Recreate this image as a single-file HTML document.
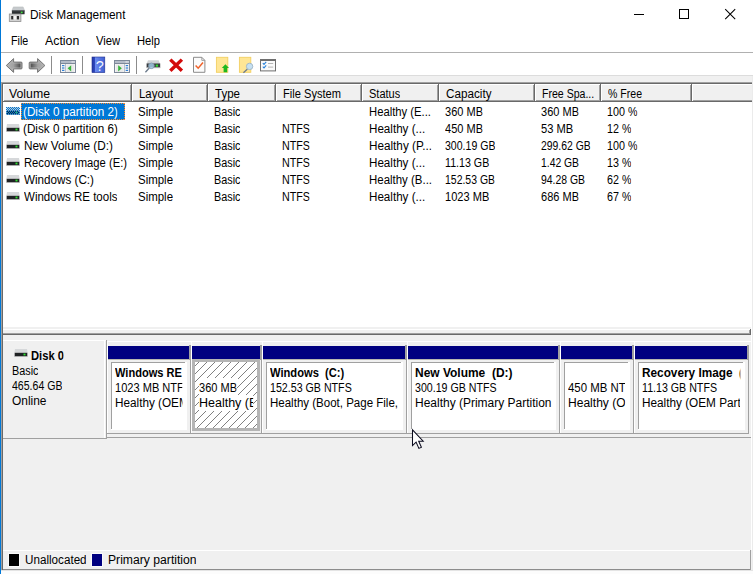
<!DOCTYPE html><html><head><meta charset="utf-8"><title>Disk Management</title><style>
html,body{margin:0;padding:0}body{width:753px;height:574px;overflow:hidden;position:relative;background:#fff;font-family:"Liberation Sans", sans-serif;}
#w{position:absolute;left:0;top:0;width:753px;height:574px;overflow:hidden}
#w div,#w svg,#w span{position:absolute;box-sizing:content-box}
#w span{white-space:pre;transform-origin:0 0;line-height:16px;height:16px;overflow:hidden}
</style></head><body><div id="w">
<div style="left:0px;top:0px;width:753px;height:574px;background:#fff;"></div>
<div style="left:0px;top:75px;width:753px;height:499px;background:#f0f0f0;"></div>
<div style="left:1px;top:52px;width:752px;height:1px;background:#b0b0b0;"></div>
<div style="left:1px;top:75px;width:752px;height:1px;background:#dcdcdc;"></div>
<svg style="left:8px;top:5px" width="18" height="18" viewBox="8 5 18 18">
<path d="M13.4 6.9 H23.1 L24.6 10.6 H11.9 Z" fill="#c6cacd" stroke="#b4b8bb" stroke-width="0.5"/>
<rect x="11.9" y="10.4" width="12.7" height="3.9" rx="0.5" fill="#2b2f31"/>
<rect x="11.9" y="10.4" width="12.7" height="0.9" fill="#4d5356"/>
<rect x="20.8" y="11.6" width="1.8" height="1.6" fill="#3ee03e"/>
<rect x="9.3" y="14" width="11.6" height="7.5" fill="#d2d2d2" stroke="#8e8e8e" stroke-width="0.8"/>
<rect x="11.2" y="16" width="2.2" height="3.4" fill="#2b2b2b"/>
<rect x="13.6" y="16" width="3" height="3.4" fill="#f4f4f4"/>
<rect x="16.8" y="16" width="2.2" height="3.4" fill="#2b2b2b"/>
</svg>
<div style="left:634px;top:14px;width:10px;height:1px;background:#000;"></div>
<div style="left:679px;top:9px;width:8px;height:8px;border:1px solid #000"></div>
<svg style="left:723px;top:7px" width="14" height="14" viewBox="0 0 14 14"><path d="M2.2 2.2 L12.2 12.2 M12.2 2.2 L2.2 12.2" stroke="#000" stroke-width="1.05" fill="none"/></svg>
<svg style="left:0;top:53px" width="300" height="22" viewBox="0 53 300 22">
<defs>
<linearGradient id="gl" x1="0" y1="0" x2="1" y2="0"><stop offset="0" stop-color="#b4b4b4"/><stop offset="0.45" stop-color="#a2a2a2"/><stop offset="0.85" stop-color="#585858"/><stop offset="1" stop-color="#808080"/></linearGradient><linearGradient id="gr" x1="1" y1="0" x2="0" y2="0"><stop offset="0" stop-color="#b4b4b4"/><stop offset="0.45" stop-color="#a2a2a2"/><stop offset="0.85" stop-color="#585858"/><stop offset="1" stop-color="#808080"/></linearGradient>
<linearGradient id="gb" x1="0" y1="0" x2="1" y2="0"><stop offset="0" stop-color="#2438a8"/><stop offset="0.22" stop-color="#2f49bd"/><stop offset="0.25" stop-color="#6b8bf0"/><stop offset="1" stop-color="#3f5fd2"/></linearGradient>
</defs>
<path d="M6.3 65.5 L13.6 58.6 V62.1 H21.2 Q22 62.1 22 62.9 V68.1 Q22 68.9 21.2 68.9 H13.6 V72.4 Z" fill="url(#gl)" stroke="#767676" stroke-width="1" stroke-linejoin="round"/>
<path d="M7.9 65.5 L12.6 61.1 V63.1 H21 V67.9 H12.6 V69.9 Z" fill="none" stroke="#b4b4b4" stroke-width="0.7" stroke-linejoin="round"/>
<path d="M44.9 65.5 L37.6 58.6 V62.1 H30 Q29.2 62.1 29.2 62.9 V68.1 Q29.2 68.9 30 68.9 H37.6 V72.4 Z" fill="url(#gr)" stroke="#767676" stroke-width="1" stroke-linejoin="round"/>
<path d="M43.3 65.5 L38.6 61.1 V63.1 H30.2 V67.9 H38.6 V69.9 Z" fill="none" stroke="#b4b4b4" stroke-width="0.7" stroke-linejoin="round"/>
<rect x="51" y="56" width="1" height="18" fill="#8c8c8c"/>
<rect x="82" y="56" width="1" height="18" fill="#8c8c8c"/>
<rect x="136" y="56" width="1" height="18" fill="#8c8c8c"/>
<!-- window + left green arrow -->
<g>
<rect x="60.5" y="60.5" width="15" height="12" fill="#f4f4f4" stroke="#7d8899" stroke-width="1"/>
<rect x="61" y="61" width="14" height="2" fill="#b4bbc8"/><rect x="71.6" y="61.4" width="1.1" height="1.1" fill="#fff"/><rect x="73.4" y="61.4" width="1.1" height="1.1" fill="#fff"/>
<rect x="61" y="63" width="14" height="1" fill="#7d8899"/>
<rect x="65" y="64" width="1" height="8" fill="#b9c0cc"/>
<rect x="62" y="65" width="2.4" height="1.2" fill="#2f7fd6"/><rect x="62" y="67.4" width="2.4" height="1.2" fill="#2f7fd6"/><rect x="62" y="69.8" width="2.4" height="1.2" fill="#2f7fd6"/>
<rect x="66.5" y="64.5" width="7.5" height="7.5" fill="#e9e9e9"/>
<path d="M71.2 65.2 V71.4 L67.6 68.3 Z" fill="#35b23a"/>
</g>
<!-- help book -->
<g>
<rect x="92" y="57" width="12.8" height="15.6" fill="url(#gb)" stroke="#20318f" stroke-width="0.6"/>
<text x="99.7" y="70.8" font-family="Liberation Sans, sans-serif" font-size="14.5" fill="#fff" fill-opacity="0.95" text-anchor="middle">?</text>
</g>
<!-- window + right green arrow -->
<g>
<rect x="114.5" y="60.5" width="15" height="12" fill="#f4f4f4" stroke="#7d8899" stroke-width="1"/>
<rect x="115" y="61" width="14" height="2" fill="#b4bbc8"/><rect x="125.6" y="61.4" width="1.1" height="1.1" fill="#fff"/><rect x="127.4" y="61.4" width="1.1" height="1.1" fill="#fff"/>
<rect x="115" y="63" width="14" height="1" fill="#7d8899"/>
<rect x="124" y="64" width="1" height="8" fill="#b9c0cc"/>
<rect x="125.7" y="65" width="2.4" height="1.2" fill="#2f7fd6"/><rect x="125.7" y="67.4" width="2.4" height="1.2" fill="#2f7fd6"/><rect x="125.7" y="69.8" width="2.4" height="1.2" fill="#2f7fd6"/>
<rect x="116" y="64.5" width="7.5" height="7.5" fill="#e9e9e9"/>
<path d="M118.2 65.2 V71.4 L121.8 68.3 Z" fill="#35b23a"/>
</g>
<!-- drive + magnifier -->
<g>
<path d="M148 60.3 H158.6 L160 63.6 H146.6 Z" fill="#d0d3d6"/>
<rect x="146.6" y="63.4" width="13.6" height="4.4" fill="#3a3e41"/>
<rect x="146.6" y="67.3" width="13.6" height="0.9" fill="#c4c4c4"/>
<rect x="155.8" y="64.6" width="2.2" height="2" fill="#2fe02f"/>
<path d="M149.3 68 L145.4 72.3" stroke="#6c7b8c" stroke-width="1.3" fill="none"/>
<circle cx="151.4" cy="65.8" r="2.8" fill="#a9d3ef" fill-opacity="0.8" stroke="#7f98ad" stroke-width="0.9"/>
</g>
<!-- red X -->
<path d="M170.3 59.6 L181.9 70.8 M181.9 59.6 L170.3 70.8" stroke="#d30a0a" stroke-width="3.4" fill="none" stroke-linecap="butt"/>
<!-- doc with check -->
<g>
<path d="M193.5 57.3 H201.8 L204.9 60.4 V72.3 H193.5 Z" fill="#fbfbfb" stroke="#8b8b8b" stroke-width="1"/>
<path d="M201.8 57.3 V60.4 H204.9" fill="none" stroke="#8b8b8b" stroke-width="0.8"/>
<path d="M195.6 65.4 L198.2 68.2 L203 62.6" stroke="#f0622a" stroke-width="1.5" fill="none"/>
</g>
<!-- yellow doc + up arrow -->
<g>
<rect x="216.4" y="57.3" width="11.4" height="15" fill="#ffe695" stroke="#f2cf62" stroke-width="0.9"/>
<path d="M225.4 64.2 L229 68 H227.2 V72.3 H223.6 V68 H221.8 Z" fill="#1fb81f"/>
</g>
<!-- yellow doc + magnifier -->
<g>
<rect x="239.4" y="57.3" width="11.4" height="15" fill="#ffe695" stroke="#f2cf62" stroke-width="0.9"/>
<path d="M247.5 69 L243.4 72.8" stroke="#6c7b8c" stroke-width="1.3" fill="none"/>
<circle cx="249.6" cy="66.4" r="3.2" fill="#c5e0f2" stroke="#9fb6c6" stroke-width="0.9"/>
</g>
<!-- checklist -->
<g>
<rect x="260.5" y="59.5" width="15" height="11.4" fill="#fafafa" stroke="#6f6f6f" stroke-width="1"/>
<rect x="260" y="59" width="16" height="2" fill="#6f6f6f"/>
<path d="M262.8 63.2 L264 64.4 L266.2 61.8 M262.8 66.7 L264 67.9 L266.2 65.3" stroke="#2f86dc" stroke-width="1.1" fill="none"/>
<rect x="268" y="63" width="5.2" height="1" fill="#b5b5b5"/><rect x="268" y="66.6" width="5.2" height="1" fill="#b5b5b5"/>
</g>
</svg>
<div style="left:1px;top:82px;width:751px;height:246px;background:#a0a0a0;"></div>
<div style="left:2px;top:83px;width:750px;height:245px;background:#696969;"></div>
<div style="left:3px;top:84px;width:749px;height:244px;background:#fff;"></div>
<div style="left:752px;top:82px;width:1px;height:246px;background:#e3e3e3;"></div>
<div style="left:3px;top:84px;width:129px;height:18px;background:#696969;"></div>
<div style="left:3px;top:84px;width:128px;height:17px;background:#fff;"></div>
<div style="left:4px;top:85px;width:127px;height:16px;background:#a0a0a0;"></div>
<div style="left:4px;top:85px;width:126px;height:15px;background:#f0f0f0;"></div>
<div style="left:132px;top:84px;width:76px;height:18px;background:#696969;"></div>
<div style="left:132px;top:84px;width:75px;height:17px;background:#fff;"></div>
<div style="left:133px;top:85px;width:74px;height:16px;background:#a0a0a0;"></div>
<div style="left:133px;top:85px;width:73px;height:15px;background:#f0f0f0;"></div>
<div style="left:208px;top:84px;width:68px;height:18px;background:#696969;"></div>
<div style="left:208px;top:84px;width:67px;height:17px;background:#fff;"></div>
<div style="left:209px;top:85px;width:66px;height:16px;background:#a0a0a0;"></div>
<div style="left:209px;top:85px;width:65px;height:15px;background:#f0f0f0;"></div>
<div style="left:276px;top:84px;width:86px;height:18px;background:#696969;"></div>
<div style="left:276px;top:84px;width:85px;height:17px;background:#fff;"></div>
<div style="left:277px;top:85px;width:84px;height:16px;background:#a0a0a0;"></div>
<div style="left:277px;top:85px;width:83px;height:15px;background:#f0f0f0;"></div>
<div style="left:362px;top:84px;width:77px;height:18px;background:#696969;"></div>
<div style="left:362px;top:84px;width:76px;height:17px;background:#fff;"></div>
<div style="left:363px;top:85px;width:75px;height:16px;background:#a0a0a0;"></div>
<div style="left:363px;top:85px;width:74px;height:15px;background:#f0f0f0;"></div>
<div style="left:439px;top:84px;width:96px;height:18px;background:#696969;"></div>
<div style="left:439px;top:84px;width:95px;height:17px;background:#fff;"></div>
<div style="left:440px;top:85px;width:94px;height:16px;background:#a0a0a0;"></div>
<div style="left:440px;top:85px;width:93px;height:15px;background:#f0f0f0;"></div>
<div style="left:535px;top:84px;width:66px;height:18px;background:#696969;"></div>
<div style="left:535px;top:84px;width:65px;height:17px;background:#fff;"></div>
<div style="left:536px;top:85px;width:64px;height:16px;background:#a0a0a0;"></div>
<div style="left:536px;top:85px;width:63px;height:15px;background:#f0f0f0;"></div>
<div style="left:601px;top:84px;width:91px;height:18px;background:#696969;"></div>
<div style="left:601px;top:84px;width:90px;height:17px;background:#fff;"></div>
<div style="left:602px;top:85px;width:89px;height:16px;background:#a0a0a0;"></div>
<div style="left:602px;top:85px;width:88px;height:15px;background:#f0f0f0;"></div>
<div style="left:692px;top:84px;width:60px;height:18px;background:#696969;"></div>
<div style="left:692px;top:84px;width:60px;height:17px;background:#fff;"></div>
<div style="left:693px;top:85px;width:59px;height:16px;background:#a0a0a0;"></div>
<div style="left:693px;top:85px;width:59px;height:15px;background:#f0f0f0;"></div>
<div style="left:21px;top:103px;width:104px;height:17px;background:#0078d7;"></div>
<div style="left:21px;top:103px;width:104px;height:1px;background:repeating-linear-gradient(90deg,#ff8728 0 1px,transparent 1px 2px)"></div>
<div style="left:21px;top:119px;width:104px;height:1px;background:repeating-linear-gradient(90deg,#ff8728 0 1px,transparent 1px 2px)"></div>
<div style="left:21px;top:103px;width:1px;height:17px;background:repeating-linear-gradient(180deg,#ff8728 0 1px,transparent 1px 2px)"></div>
<div style="left:124px;top:103px;width:1px;height:17px;background:repeating-linear-gradient(180deg,#ff8728 0 1px,transparent 1px 2px)"></div>
<svg style="left:6px;top:107px" width="14" height="8" viewBox="0 0 14 8"><defs><pattern id="dz" width="2" height="2" patternUnits="userSpaceOnUse"><rect width="1" height="1" fill="#0078d7"/><rect x="1" y="1" width="1" height="1" fill="#0078d7"/></pattern></defs><rect x="1" y="0" width="12" height="4" fill="#d4d4d4"/><rect x="0" y="3.6" width="14" height="4.4" fill="#c8c8c8"/><rect x="0.8" y="3.8" width="12.4" height="3.4" fill="#222"/><rect x="9.5" y="4.6" width="2" height="1.8" fill="#2fe02f"/><rect width="14" height="8" fill="url(#dz)"/><rect width="14" height="8" fill="#0078d7" fill-opacity="0.12"/></svg>
<svg style="left:6px;top:124px" width="14" height="8" viewBox="0 0 14 8"><path d="M1 0 H13 L13.6 3.8 H0.4 Z" fill="#d6d8da"/><rect x="0" y="3.6" width="14" height="4.4" fill="#cfcfcf"/><rect x="0.8" y="3.8" width="12.4" height="3.4" fill="#1f2224"/><rect x="9.5" y="4.6" width="2" height="1.8" fill="#2fe02f"/></svg>
<svg style="left:6px;top:141px" width="14" height="8" viewBox="0 0 14 8"><path d="M1 0 H13 L13.6 3.8 H0.4 Z" fill="#d6d8da"/><rect x="0" y="3.6" width="14" height="4.4" fill="#cfcfcf"/><rect x="0.8" y="3.8" width="12.4" height="3.4" fill="#1f2224"/><rect x="9.5" y="4.6" width="2" height="1.8" fill="#2fe02f"/></svg>
<svg style="left:6px;top:158px" width="14" height="8" viewBox="0 0 14 8"><path d="M1 0 H13 L13.6 3.8 H0.4 Z" fill="#d6d8da"/><rect x="0" y="3.6" width="14" height="4.4" fill="#cfcfcf"/><rect x="0.8" y="3.8" width="12.4" height="3.4" fill="#1f2224"/><rect x="9.5" y="4.6" width="2" height="1.8" fill="#2fe02f"/></svg>
<svg style="left:6px;top:175px" width="14" height="8" viewBox="0 0 14 8"><path d="M1 0 H13 L13.6 3.8 H0.4 Z" fill="#d6d8da"/><rect x="0" y="3.6" width="14" height="4.4" fill="#cfcfcf"/><rect x="0.8" y="3.8" width="12.4" height="3.4" fill="#1f2224"/><rect x="9.5" y="4.6" width="2" height="1.8" fill="#2fe02f"/></svg>
<svg style="left:6px;top:192px" width="14" height="8" viewBox="0 0 14 8"><path d="M1 0 H13 L13.6 3.8 H0.4 Z" fill="#d6d8da"/><rect x="0" y="3.6" width="14" height="4.4" fill="#cfcfcf"/><rect x="0.8" y="3.8" width="12.4" height="3.4" fill="#1f2224"/><rect x="9.5" y="4.6" width="2" height="1.8" fill="#2fe02f"/></svg>
<div style="left:1px;top:327px;width:752px;height:8px;background:#f0f0f0;"></div>
<div style="left:3px;top:329px;width:748px;height:1px;background:#fff;"></div>
<div style="left:3px;top:333px;width:747px;height:1px;background:#a0a0a0;"></div>
<div style="left:3px;top:334px;width:748px;height:1px;background:#696969;"></div>
<div style="left:749px;top:330px;width:1px;height:4px;background:#a0a0a0;"></div>
<div style="left:750px;top:329px;width:1px;height:6px;background:#696969;"></div>
<div style="left:751px;top:327px;width:1px;height:8px;background:#fff;"></div>
<div style="left:1px;top:327px;width:1px;height:8px;background:#a0a0a0;"></div>
<div style="left:2px;top:327px;width:1px;height:8px;background:#696969;"></div>
<div style="left:1px;top:335px;width:1px;height:235px;background:#a0a0a0;"></div>
<div style="left:2px;top:335px;width:1px;height:235px;background:#696969;"></div>
<div style="left:751px;top:335px;width:2px;height:215px;background:#fff;"></div>
<div style="left:3px;top:340px;width:103px;height:1px;background:#fff;"></div>
<div style="left:104px;top:341px;width:1px;height:97px;background:#fff;"></div>
<div style="left:3px;top:438px;width:104px;height:1px;background:#a0a0a0;"></div>
<div style="left:106px;top:340px;width:1px;height:99px;background:#a0a0a0;"></div>
<div style="left:107px;top:341px;width:644px;height:1px;background:#fff;"></div>
<div style="left:107px;top:342px;width:1px;height:92px;background:#fff;"></div>
<div style="left:106px;top:433px;width:643px;height:1px;background:#a0a0a0;"></div>
<div style="left:106px;top:437px;width:645px;height:1px;background:#a0a0a0;"></div>
<svg style="left:14px;top:349px" width="14" height="8" viewBox="0 0 14 8"><path d="M1 0 H13 L13.6 3.8 H0.4 Z" fill="#d6d8da"/><rect x="0" y="3.6" width="14" height="4.4" fill="#cfcfcf"/><rect x="0.8" y="3.8" width="12.4" height="3.4" fill="#1f2224"/><rect x="9.5" y="4.6" width="2" height="1.8" fill="#2fe02f"/></svg>
<div style="left:108px;top:346px;width:81px;height:13px;background:#000080;"></div>
<div style="left:108px;top:359px;width:81px;height:1px;background:#b8b8b0;"></div>
<div style="left:189px;top:345px;width:2px;height:15px;background:#a0a0a0;"></div>
<div style="left:190px;top:360px;width:1px;height:73px;background:#a0a0a0;"></div>
<div style="left:191px;top:342px;width:1px;height:91px;background:#fff;"></div>
<div style="left:111px;top:362px;width:76px;height:68px;background:#fff;"></div>
<div style="left:111px;top:362px;width:74px;height:1px;background:#a0a0a0;"></div>
<div style="left:111px;top:362px;width:1px;height:67px;background:#a0a0a0;"></div>
<div style="left:192px;top:346px;width:68px;height:13px;background:#000080;"></div>
<div style="left:192px;top:359px;width:68px;height:1px;background:#b8b8b0;"></div>
<div style="left:260px;top:345px;width:2px;height:15px;background:#a0a0a0;"></div>
<div style="left:261px;top:360px;width:1px;height:73px;background:#a0a0a0;"></div>
<div style="left:262px;top:342px;width:1px;height:91px;background:#fff;"></div>
<div style="left:192px;top:359px;width:62px;height:66px;border:3px solid #b4b4b4;background:#fff"></div>
<svg style="left:195px;top:362px" width="62" height="66" shape-rendering="crispEdges"><defs><pattern id="hz" width="8" height="8" patternUnits="userSpaceOnUse"><g fill="#808080"><rect x="3" y="0" width="1" height="1"/><rect x="2" y="1" width="1" height="1"/><rect x="1" y="2" width="1" height="1"/><rect x="0" y="3" width="1" height="1"/><rect x="7" y="4" width="1" height="1"/><rect x="6" y="5" width="1" height="1"/><rect x="5" y="6" width="1" height="1"/><rect x="4" y="7" width="1" height="1"/></g></pattern></defs><rect width="62" height="66" fill="url(#hz)"/></svg>
<div style="left:263px;top:346px;width:142px;height:13px;background:#000080;"></div>
<div style="left:263px;top:359px;width:142px;height:1px;background:#b8b8b0;"></div>
<div style="left:405px;top:345px;width:2px;height:15px;background:#a0a0a0;"></div>
<div style="left:406px;top:360px;width:1px;height:73px;background:#a0a0a0;"></div>
<div style="left:407px;top:342px;width:1px;height:91px;background:#fff;"></div>
<div style="left:266px;top:362px;width:137px;height:68px;background:#fff;"></div>
<div style="left:266px;top:362px;width:135px;height:1px;background:#a0a0a0;"></div>
<div style="left:266px;top:362px;width:1px;height:67px;background:#a0a0a0;"></div>
<div style="left:408px;top:346px;width:150px;height:13px;background:#000080;"></div>
<div style="left:408px;top:359px;width:150px;height:1px;background:#b8b8b0;"></div>
<div style="left:558px;top:345px;width:2px;height:15px;background:#a0a0a0;"></div>
<div style="left:559px;top:360px;width:1px;height:73px;background:#a0a0a0;"></div>
<div style="left:560px;top:342px;width:1px;height:91px;background:#fff;"></div>
<div style="left:411px;top:362px;width:145px;height:68px;background:#fff;"></div>
<div style="left:411px;top:362px;width:143px;height:1px;background:#a0a0a0;"></div>
<div style="left:411px;top:362px;width:1px;height:67px;background:#a0a0a0;"></div>
<div style="left:561px;top:346px;width:71px;height:13px;background:#000080;"></div>
<div style="left:561px;top:359px;width:71px;height:1px;background:#b8b8b0;"></div>
<div style="left:632px;top:345px;width:2px;height:15px;background:#a0a0a0;"></div>
<div style="left:633px;top:360px;width:1px;height:73px;background:#a0a0a0;"></div>
<div style="left:634px;top:342px;width:1px;height:91px;background:#fff;"></div>
<div style="left:564px;top:362px;width:66px;height:68px;background:#fff;"></div>
<div style="left:564px;top:362px;width:64px;height:1px;background:#a0a0a0;"></div>
<div style="left:564px;top:362px;width:1px;height:67px;background:#a0a0a0;"></div>
<div style="left:635px;top:346px;width:112px;height:13px;background:#000080;"></div>
<div style="left:635px;top:359px;width:112px;height:1px;background:#b8b8b0;"></div>
<div style="left:747px;top:345px;width:2px;height:15px;background:#a0a0a0;"></div>
<div style="left:748px;top:360px;width:1px;height:73px;background:#a0a0a0;"></div>
<div style="left:638px;top:362px;width:107px;height:68px;background:#fff;"></div>
<div style="left:638px;top:362px;width:105px;height:1px;background:#a0a0a0;"></div>
<div style="left:638px;top:362px;width:1px;height:67px;background:#a0a0a0;"></div>
<div style="left:199px;top:378px;width:39px;height:3px;background:#fff;"></div>
<div style="left:3px;top:550px;width:747px;height:1px;background:#fff;"></div>
<div style="left:3px;top:569px;width:748px;height:1px;background:#8c8c8c;"></div>
<div style="left:750px;top:550px;width:1px;height:20px;background:#a0a0a0;"></div>
<div style="left:8px;top:553px;width:12px;height:14px;background:#fafafa;"></div>
<div style="left:9px;top:554px;width:10px;height:12px;background:#000;"></div>
<div style="left:91px;top:553px;width:12px;height:14px;background:#fafafa;"></div>
<div style="left:92px;top:554px;width:10px;height:12px;background:#000080;"></div>
<div style="left:1px;top:570px;width:752px;height:1px;background:#e4e4e4;"></div>
<div style="left:1px;top:571px;width:752px;height:3px;background:#fcfcfc;"></div>
<div style="left:752px;top:76px;width:1px;height:494px;background:#ebebeb;"></div>
<div style="left:0px;top:0px;width:1px;height:574px;background:#0078d7;"></div>
<svg style="left:410px;top:427px" width="16" height="24" viewBox="-2 -2 16 24"><path d="M0.5 0.8 V16.6 L4.1 13.1 L6.9 19.4 L9.4 18.3 L6.7 12.3 L11.2 12.2 Z" fill="#fff" stroke="#0b0b1e" stroke-width="1.05" stroke-linejoin="miter"/></svg>
<span id="t0" style="left:30px;top:7px;font-size:12px;color:#000;transform:scaleX(0.9874);">Disk Management</span>
<span id="t1" style="left:11px;top:33px;font-size:12px;color:#000;transform:scaleX(0.8943);">File</span>
<span id="t2" style="left:45px;top:33px;font-size:12px;color:#000;transform:scaleX(1.0282);">Action</span>
<span id="t3" style="left:96.2px;top:33px;font-size:12px;color:#000;transform:scaleX(0.9381);">View</span>
<span id="t4" style="left:137px;top:33px;font-size:12px;color:#000;transform:scaleX(0.9316);">Help</span>
<span id="t5" style="left:8.9px;top:86px;font-size:12px;color:#000;transform:scaleX(1.0242);">Volume</span>
<span id="t6" style="left:138.5px;top:86px;font-size:12px;color:#000;transform:scaleX(0.9506);">Layout</span>
<span id="t7" style="left:214.5px;top:86px;font-size:12px;color:#000;transform:scaleX(0.9610);">Type</span>
<span id="t8" style="left:282.5px;top:86px;font-size:12px;color:#000;transform:scaleX(0.9252);">File System</span>
<span id="t9" style="left:368.5px;top:86px;font-size:12px;color:#000;transform:scaleX(0.9183);">Status</span>
<span id="t10" style="left:445.5px;top:86px;font-size:12px;color:#000;transform:scaleX(0.9746);">Capacity</span>
<span id="t11" style="left:541.5px;top:86px;font-size:12px;color:#000;transform:scaleX(0.8800);">Free Spa...</span>
<span id="t12" style="left:607.5px;top:86px;font-size:12px;color:#000;transform:scaleX(0.8788);">% Free</span>
<span id="t13" style="left:23.4px;top:104px;font-size:12px;color:#fff;transform:scaleX(0.9756);">(Disk 0 partition 2)</span>
<span id="t14" style="left:138.3px;top:104px;font-size:12px;color:#000;transform:scaleX(0.9540);">Simple</span>
<span id="t15" style="left:214.2px;top:104px;font-size:12px;color:#000;transform:scaleX(0.9031);">Basic</span>
<span id="t16" style="left:368.6px;top:104px;font-size:12px;color:#000;transform:scaleX(0.9389);">Healthy (E...</span>
<span id="t17" style="left:445.2px;top:104px;font-size:12px;color:#000;transform:scaleX(0.9188);">360 MB</span>
<span id="t18" style="left:541.2px;top:104px;font-size:12px;color:#000;transform:scaleX(0.9188);">360 MB</span>
<span id="t19" style="left:607.2px;top:104px;font-size:12px;color:#000;transform:scaleX(0.8962);">100 %</span>
<span id="t20" style="left:23.4px;top:121px;font-size:12px;color:#000;transform:scaleX(0.9756);">(Disk 0 partition 6)</span>
<span id="t21" style="left:138.3px;top:121px;font-size:12px;color:#000;transform:scaleX(0.9540);">Simple</span>
<span id="t22" style="left:214.2px;top:121px;font-size:12px;color:#000;transform:scaleX(0.9031);">Basic</span>
<span id="t23" style="left:282.2px;top:121px;font-size:12px;color:#000;transform:scaleX(0.8933);">NTFS</span>
<span id="t24" style="left:368.6px;top:121px;font-size:12px;color:#000;transform:scaleX(0.9693);">Healthy (...</span>
<span id="t25" style="left:445.2px;top:121px;font-size:12px;color:#000;transform:scaleX(0.9188);">450 MB</span>
<span id="t26" style="left:541.2px;top:121px;font-size:12px;color:#000;transform:scaleX(0.9297);">53 MB</span>
<span id="t27" style="left:607.2px;top:121px;font-size:12px;color:#000;transform:scaleX(0.8955);">12 %</span>
<span id="t28" style="left:23.799999999999997px;top:138px;font-size:12px;color:#000;transform:scaleX(0.9812);">New Volume (D:)</span>
<span id="t29" style="left:138.3px;top:138px;font-size:12px;color:#000;transform:scaleX(0.9540);">Simple</span>
<span id="t30" style="left:214.2px;top:138px;font-size:12px;color:#000;transform:scaleX(0.9031);">Basic</span>
<span id="t31" style="left:282.2px;top:138px;font-size:12px;color:#000;transform:scaleX(0.8933);">NTFS</span>
<span id="t32" style="left:368.6px;top:138px;font-size:12px;color:#000;transform:scaleX(0.9770);">Healthy (P...</span>
<span id="t33" style="left:445.2px;top:138px;font-size:12px;color:#000;transform:scaleX(0.8802);">300.19 GB</span>
<span id="t34" style="left:541.2px;top:138px;font-size:12px;color:#000;transform:scaleX(0.8671);">299.62 GB</span>
<span id="t35" style="left:607.2px;top:138px;font-size:12px;color:#000;transform:scaleX(0.8962);">100 %</span>
<span id="t36" style="left:23.799999999999997px;top:155px;font-size:12px;color:#000;transform:scaleX(0.9360);">Recovery Image (E:)</span>
<span id="t37" style="left:138.3px;top:155px;font-size:12px;color:#000;transform:scaleX(0.9540);">Simple</span>
<span id="t38" style="left:214.2px;top:155px;font-size:12px;color:#000;transform:scaleX(0.9031);">Basic</span>
<span id="t39" style="left:282.2px;top:155px;font-size:12px;color:#000;transform:scaleX(0.8933);">NTFS</span>
<span id="t40" style="left:368.6px;top:155px;font-size:12px;color:#000;transform:scaleX(0.9693);">Healthy (...</span>
<span id="t41" style="left:445.2px;top:155px;font-size:12px;color:#000;transform:scaleX(0.8883);">11.13 GB</span>
<span id="t42" style="left:541.2px;top:155px;font-size:12px;color:#000;transform:scaleX(0.8630);">1.42 GB</span>
<span id="t43" style="left:607.2px;top:155px;font-size:12px;color:#000;transform:scaleX(0.8955);">13 %</span>
<span id="t44" style="left:23.799999999999997px;top:172px;font-size:12px;color:#000;transform:scaleX(0.9720);">Windows (C:)</span>
<span id="t45" style="left:138.3px;top:172px;font-size:12px;color:#000;transform:scaleX(0.9540);">Simple</span>
<span id="t46" style="left:214.2px;top:172px;font-size:12px;color:#000;transform:scaleX(0.9031);">Basic</span>
<span id="t47" style="left:282.2px;top:172px;font-size:12px;color:#000;transform:scaleX(0.8933);">NTFS</span>
<span id="t48" style="left:368.6px;top:172px;font-size:12px;color:#000;transform:scaleX(0.9541);">Healthy (B...</span>
<span id="t49" style="left:445.2px;top:172px;font-size:12px;color:#000;transform:scaleX(0.8715);">152.53 GB</span>
<span id="t50" style="left:541.2px;top:172px;font-size:12px;color:#000;transform:scaleX(0.8678);">94.28 GB</span>
<span id="t51" style="left:607.2px;top:172px;font-size:12px;color:#000;transform:scaleX(0.8955);">62 %</span>
<span id="t52" style="left:23.799999999999997px;top:189px;font-size:12px;color:#000;transform:scaleX(0.9602);">Windows RE tools</span>
<span id="t53" style="left:138.3px;top:189px;font-size:12px;color:#000;transform:scaleX(0.9540);">Simple</span>
<span id="t54" style="left:214.2px;top:189px;font-size:12px;color:#000;transform:scaleX(0.9031);">Basic</span>
<span id="t55" style="left:282.2px;top:189px;font-size:12px;color:#000;transform:scaleX(0.8933);">NTFS</span>
<span id="t56" style="left:368.6px;top:189px;font-size:12px;color:#000;transform:scaleX(0.9693);">Healthy (...</span>
<span id="t57" style="left:445.2px;top:189px;font-size:12px;color:#000;transform:scaleX(0.9213);">1023 MB</span>
<span id="t58" style="left:541.2px;top:189px;font-size:12px;color:#000;transform:scaleX(0.9188);">686 MB</span>
<span id="t59" style="left:607.2px;top:189px;font-size:12px;color:#000;transform:scaleX(0.8955);">67 %</span>
<span id="t60" style="left:30.5px;top:348px;font-size:12px;color:#000;font-weight:bold;transform:scaleX(0.9333);">Disk 0</span>
<span id="t61" style="left:12px;top:363px;font-size:12px;color:#000;transform:scaleX(0.9031);">Basic</span>
<span id="t62" style="left:12px;top:378px;font-size:12px;color:#000;transform:scaleX(0.8802);">465.64 GB</span>
<span id="t63" style="left:12px;top:393px;font-size:12px;color:#000;transform:scaleX(0.9946);">Online</span>
<span id="t64" style="left:115px;top:365px;font-size:12px;color:#000;font-weight:bold;transform:scaleX(0.9233);width:73.10px;">Windows RE</span>
<span id="t65" style="left:115px;top:380px;font-size:12px;color:#000;transform:scaleX(0.9213);width:73.27px;">1023 MB NTF</span>
<span id="t66" style="left:115px;top:395px;font-size:12px;color:#000;transform:scaleX(0.9786);width:68.97px;">Healthy (OEM</span>
<span id="t67" style="left:199px;top:380px;font-size:12px;color:#000;background:#fff;transform:scaleX(0.9188);">360 MB</span>
<span id="t68" style="left:199px;top:395px;font-size:12px;color:#000;background:#fff;transform:scaleX(1.0410);width:52.35px;">Healthy (E</span>
<span id="t69" style="left:270px;top:365px;font-size:12px;color:#000;font-weight:bold;transform:scaleX(0.9296);width:138.23px;">Windows  (C:)</span>
<span id="t70" style="left:270px;top:380px;font-size:12px;color:#000;transform:scaleX(0.8881);width:144.69px;">152.53 GB NTFS</span>
<span id="t71" style="left:270px;top:395px;font-size:12px;color:#000;transform:scaleX(0.9595);width:133.93px;">Healthy (Boot, Page File,</span>
<span id="t72" style="left:415px;top:365px;font-size:12px;color:#000;font-weight:bold;transform:scaleX(0.9971);width:136.89px;">New Volume  (D:)</span>
<span id="t73" style="left:415px;top:380px;font-size:12px;color:#000;transform:scaleX(0.8854);width:154.16px;">300.19 GB NTFS</span>
<span id="t74" style="left:415px;top:395px;font-size:12px;color:#000;transform:scaleX(0.9984);width:136.72px;">Healthy (Primary Partition</span>
<span id="t75" style="left:568px;top:380px;font-size:12px;color:#000;transform:scaleX(0.9516);width:60.42px;">450 MB NT</span>
<span id="t76" style="left:568px;top:395px;font-size:12px;color:#000;transform:scaleX(1.0042);width:57.26px;">Healthy (O</span>
<span id="t77" style="left:642px;top:365px;font-size:12px;color:#000;font-weight:bold;transform:scaleX(0.9830);width:100.20px;">Recovery Image  (</span>
<span id="t78" style="left:642px;top:380px;font-size:12px;color:#000;transform:scaleX(0.8877);width:110.96px;">11.13 GB NTFS</span>
<span id="t79" style="left:642px;top:395px;font-size:12px;color:#000;transform:scaleX(0.9811);width:100.40px;">Healthy (OEM Part</span>
<span id="t80" style="left:24.8px;top:552px;font-size:12px;color:#000;transform:scaleX(0.9720);">Unallocated</span>
<span id="t81" style="left:108px;top:552px;font-size:12px;color:#000;transform:scaleX(1.0142);">Primary partition</span>
</div></body></html>
